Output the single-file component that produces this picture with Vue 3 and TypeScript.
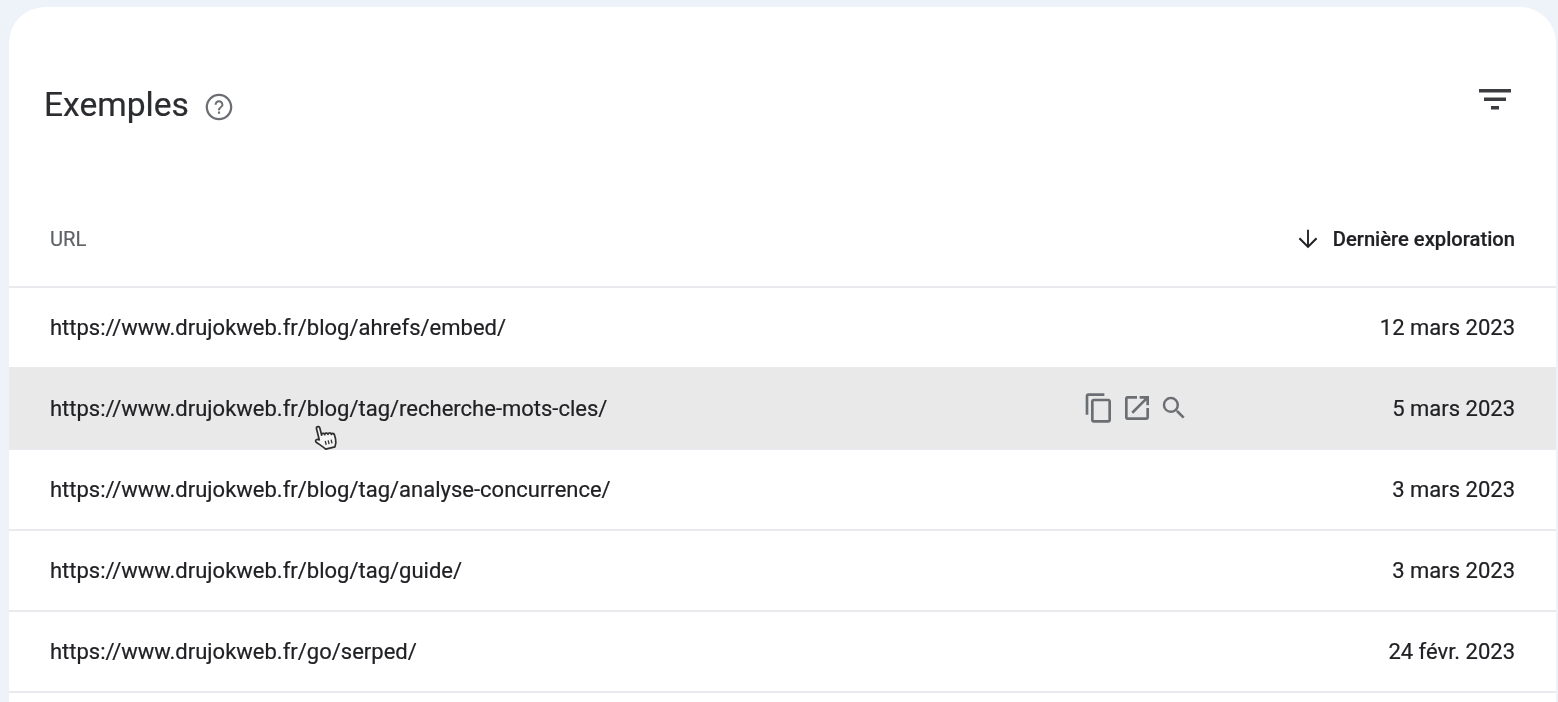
<script setup lang="ts">
interface Row { url: string; date: string; hover?: boolean }
const rows: Row[] = [
  { url: 'https://www.drujokweb.fr/blog/ahrefs/embed/', date: '12 mars 2023' },
  { url: 'https://www.drujokweb.fr/blog/tag/recherche-mots-cles/', date: '5 mars 2023', hover: true },
  { url: 'https://www.drujokweb.fr/blog/tag/analyse-concurrence/', date: '3 mars 2023' },
  { url: 'https://www.drujokweb.fr/blog/tag/guide/', date: '3 mars 2023' },
  { url: 'https://www.drujokweb.fr/go/serped/', date: '24 févr. 2023' },
]
</script>

<template>
  <div class="page">
    <section class="card">
      <header class="head">
        <div class="title-wrap">
          <h2 class="title">Exemples</h2>
          <svg class="help" viewBox="0 0 24 24" width="32" height="32" fill="#6b6e72">
            <path d="M11.200 17h1.600v-1.600h-1.600V17zM12 2C6.480 2 2 6.480 2 12s4.480 10 10 10 10-4.480 10-10S17.520 2 12 2zm0 18.300c-4.580 0-8.300-3.720-8.300-8.300S7.420 3.700 12 3.700s8.300 3.720 8.300 8.300-3.720 8.300-8.300 8.300zM12 7c-1.900 0-3.300 1.400-3.300 3.300h1.500c0-1 .8-1.800 1.800-1.800s1.800.8 1.800 1.800c0 1.700-2.600 1.600-2.600 4.200h1.600c0-1.900 2.500-2.200 2.500-4.200C15.300 8.400 13.900 7 12 7z"/>
          </svg>
        </div>
        <svg class="filter" viewBox="0 0 32 24" width="32" height="24" fill="#3a3c40">
          <path d="M0 1h32v3.500H0zM5 9.500h22V13H5zM12 18h8v3.500h-8z"/>
        </svg>
      </header>
      <div class="row head-row">
        <span class="url-head">URL</span>
        <span class="sort">
          <svg viewBox="0 0 24 24" width="28" height="28" fill="#202124">
            <path d="M20 12l-1.250-1.250L12.800 16.700V4h-1.600v12.700l-5.950-5.950L4 12l8 8 8-8z"/>
          </svg>
          Dernière exploration
        </span>
      </div>
      <div v-for="r in rows" :key="r.url" class="row" :class="{ hover: r.hover }">
        <span class="url">{{ r.url }}</span>
        <span v-if="r.hover" class="actions">
          <svg viewBox="0 0 24 24" width="32" height="32" fill="#6b6e72">
            <path d="M16 1H4c-1.100 0-2 .9-2 2v14h2V3h12V1zm3 4H8c-1.100 0-2 .9-2 2v14c0 1.100.9 2 2 2h11c1.100 0 2-.9 2-2V7c0-1.100-.9-2-2-2zm0 16H8V7h11v14z"/>
          </svg>
          <svg viewBox="0 0 24 24" width="32" height="32" fill="#6b6e72">
            <path d="M19 19H5V5h7V3H5a2 2 0 0 0-2 2v14a2 2 0 0 0 2 2h14c1.100 0 2-.9 2-2v-7h-2v7zM14 3v2h3.590l-9.830 9.830 1.410 1.410L19 6.410V10h2V3h-7z"/>
          </svg>
          <svg viewBox="0 0 24 24" width="30" height="30" fill="#6b6e72">
            <path d="M15.500 14h-.79l-.28-.27A6.470 6.470 0 0 0 16 9.500 6.500 6.500 0 1 0 9.500 16c1.610 0 3.090-.59 4.230-1.570l.27.28v.79l5 4.990L20.490 19l-4.990-5zm-6 0C7.010 14 5 11.990 5 9.500S7.010 5 9.500 5 14 7.010 14 9.500 11.990 14 9.500 14z"/>
          </svg>
        </span>
        <span class="date">{{ r.date }}</span>
        <svg v-if="r.hover" class="cursor" viewBox="0 0 28 30" width="28" height="30">
          <g transform="rotate(-14 14 15)">
            <path d="M8 4c0-2.400 3.400-2.400 3.400 0V11.500c0-2 3.200-2 3.200.3 0-1.800 3.200-1.800 3.200.4 0-1.500 3.200-1.500 3.200.8 0-1 3-1 3 1.500v4c0 3-1 5-2.500 7.500H12c-2-3-4.500-5.500-7.500-9-1.400-2 1.500-3.500 3.500-1.500z" fill="#f4f4f4" stroke="#2f2f2f" stroke-width="1.700" stroke-linejoin="round"/>
            <path d="M13.500 18v4M16.500 18v4M19.500 18v4" stroke="#2f2f2f" stroke-width="1.300"/>
          </g>
        </svg>
      </div>
    </section>
  </div>
</template>

<style scoped>
.page {
  height: 702px;
  box-sizing: border-box;
  padding: 7px 2px 0 9px;
  background: #edf3f9;
  overflow: hidden;
  font-family: Roboto, "Liberation Sans", sans-serif;
  color: #202124;
  filter: blur(.5px);
  -webkit-text-stroke: .2px currentColor;
}
.card {
  background: #fff;
  border-radius: 36px 36px 0 0;
  height: 695px;
}
.head {
  display: flex;
  justify-content: space-between;
  align-items: flex-start;
  height: 191px;
  box-sizing: border-box;
  padding: 73px 45px 0 35px;
}
.title-wrap {
  display: flex;
  align-items: center;
  gap: 14px;
}
.title {
  margin: 0;
  font-size: 33.600px;
  font-weight: 400;
  line-height: 50px;
  color: #2b2c2f;
}
.help {
  margin-top: 3px;
}
.filter {
  margin-top: 8px;
}
.row {
  position: relative;
  display: flex;
  align-items: center;
  height: 81px;
  box-sizing: border-box;
  padding: 0 41px;
  border-bottom: 2px solid #e8eaed;
  font-size: 22px;
}
.head-row {
  height: 89.500px;
  justify-content: space-between;
  padding-bottom: 5px;
  font-size: 20.200px;
}
.url-head {
  color: #5f6368;
}
.sort {
  display: flex;
  align-items: center;
  gap: 11px;
  font-weight: 500;
}
.hover {
  background: #e9e9e9;
}
.url {
  flex: none;
  width: 1033px;
}
.actions {
  display: flex;
  align-items: center;
  gap: 6px;
}
.date {
  margin-left: auto;
}
.cursor {
  position: absolute;
  left: 302px;
  top: 54px;
}
</style>
